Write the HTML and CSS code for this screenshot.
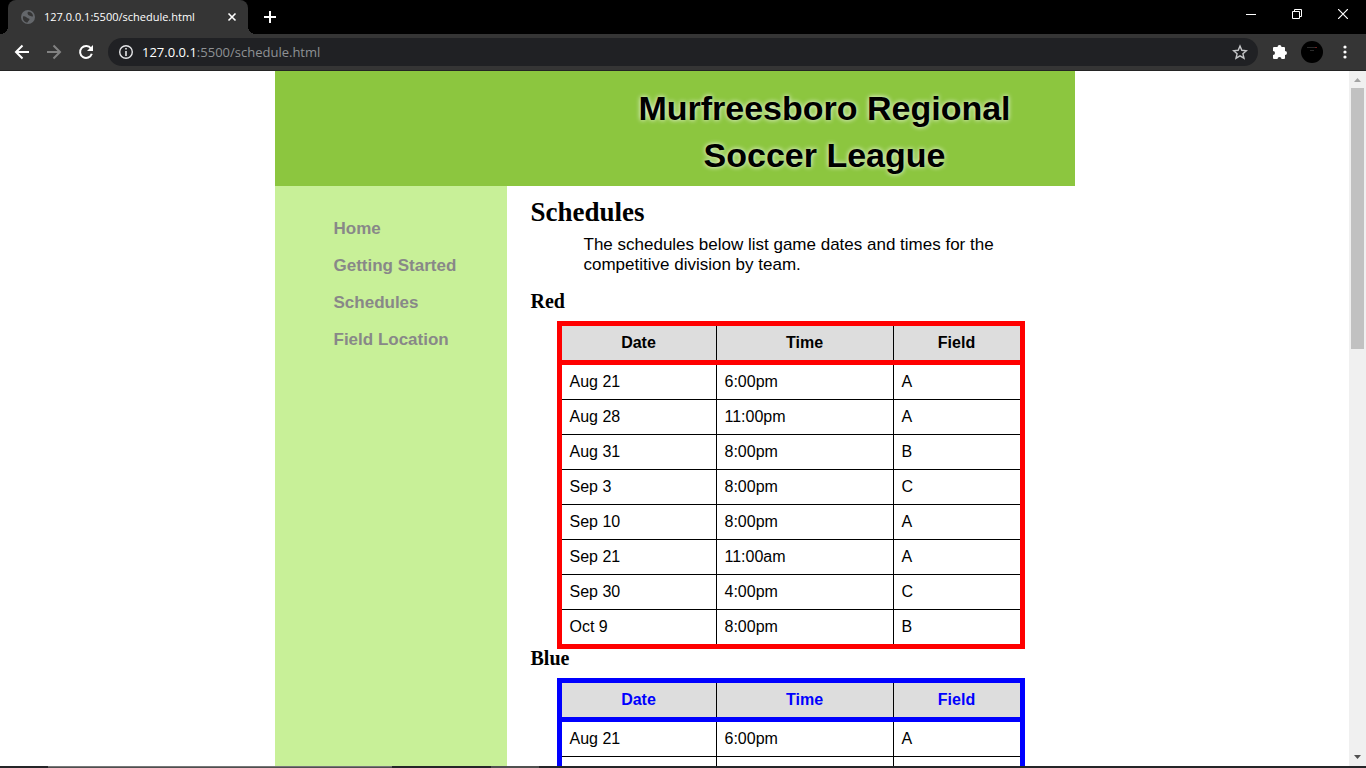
FILE: index.html
```html
<!DOCTYPE html>
<html lang="en">
<head>
<meta charset="utf-8">
<title>Murfreesboro Regional Soccer League</title>
<link rel="stylesheet" href="styles.css">
</head>
<body>
<div class="browser">
  <div class="tabstrip">
    <div class="tab">
      <svg class="favicon" width="16" height="16" viewBox="0 0 16 16" aria-hidden="true"><circle cx="8" cy="8" r="7" fill="#64676b"/><path d="M3 7.500c1.500-.8 3 .2 4 1.200s2.500.3 2.500 1.500-1.500 1.500-2 3.300C4.500 13.500 2.500 11 3 7.500zM8 3c1.500-.8 3.500.5 4.500 2.200.8 1.500.5 2.800-.5 2.300-1-.6-1.800-.5-2.800-1S6.800 4 8 3z" fill="#353535"/></svg>
      <span class="tab-title">127.0.0.1:5500/schedule.html</span>
      <button class="icon-btn tab-close" aria-label="Close tab"><svg width="10" height="10" viewBox="0 0 10 10"><path d="M1.500 1.500l7 7M8.500 1.500l-7 7" stroke="#fff" stroke-width="1.600"/></svg></button>
    </div>
    <button class="icon-btn new-tab" aria-label="New tab"><svg width="12" height="12" viewBox="0 0 12 12"><path d="M6 0v12M0 6h12" stroke="#fff" stroke-width="2"/></svg></button>
    <div class="window-controls">
      <button class="icon-btn" aria-label="Minimize"><svg width="10" height="10" viewBox="0 0 10 10"><path d="M0 5.500h10" stroke="#fff"/></svg></button>
      <button class="icon-btn" aria-label="Restore"><svg width="10" height="10" viewBox="0 0 10 10"><path d="M.5 2.500h7v7h-7zM2.500 2.500v-2h7v7h-2" fill="none" stroke="#fff"/></svg></button>
      <button class="icon-btn" aria-label="Close"><svg width="10" height="10" viewBox="0 0 10 10"><path d="M0 0l10 10M10 0L0 10" stroke="#fff" stroke-width="1.200"/></svg></button>
    </div>
  </div>
  <div class="toolbar">
    <button class="icon-btn" aria-label="Back"><svg width="16" height="16" viewBox="0 0 16 16"><path d="M15 8H2M8.500 1.500L2 8l6.500 6.500" fill="none" stroke="#fff" stroke-width="2"/></svg></button>
    <button class="icon-btn" aria-label="Forward"><svg width="16" height="16" viewBox="0 0 16 16"><path d="M1 8h13M7.500 1.500L14 8l-6.500 6.500" fill="none" stroke="#828282" stroke-width="2"/></svg></button>
    <button class="icon-btn" aria-label="Reload"><svg width="16" height="16" viewBox="0 0 16 16"><path d="M13 4.500A6 6 0 1 0 13.800 9.800" fill="none" stroke="#fff" stroke-width="2"/><path d="M15 1v6H9z" fill="#fff"/></svg></button>
    <div class="omnibox">
      <svg width="16" height="16" viewBox="0 0 16 16" aria-hidden="true"><circle cx="8" cy="8" r="6.300" fill="none" stroke="#e4e5e7" stroke-width="1.400"/><path d="M8 4v1.600M8 7v5" stroke="#e4e5e7" stroke-width="1.600"/></svg>
      <span class="url"><b>127.0.0.1</b>:5500/schedule.html</span>
      <button class="icon-btn star" aria-label="Bookmark"><svg width="16" height="16" viewBox="0 0 16 16"><path d="M8 2l1.800 4.300 4.600.4-3.500 3 1.100 4.500L8 11.800l-4 2.400 1.100-4.500-3.500-3 4.600-.4z" fill="none" stroke="#c5c6c8" stroke-width="1.400"/></svg></button>
    </div>
    <div class="actions">
      <button class="icon-btn" aria-label="Extensions"><svg width="16" height="16" viewBox="0 0 16 16"><path d="M2 3h3.500a2 2 0 1 1 4 0H12a1 1 0 0 1 1 1v3a2 2 0 1 1 0 4v3a1 1 0 0 1-1 1H9.500a2 2 0 0 0-4 0H2a1 1 0 0 1-1-1v-3a2 2 0 0 0 0-4V4a1 1 0 0 1 1-1z" fill="#fff"/></svg></button>
      <button class="icon-btn" aria-label="Profile"><svg width="22" height="22" viewBox="0 0 22 22"><circle cx="11" cy="11" r="11" fill="#000"/><path d="M6 6.500h8M9 9.500h4" stroke="#2b2b2b"/><path d="M14 6.500h2" stroke="#702222"/></svg></button>
      <button class="icon-btn" aria-label="Menu"><svg width="4" height="16" viewBox="0 0 4 16"><g fill="#fff"><circle cx="2" cy="3" r="1.600"/><circle cx="2" cy="8" r="1.600"/><circle cx="2" cy="13" r="1.600"/></g></svg></button>
    </div>
  </div>
  <div class="viewport">
    <div class="document">
      <div class="page">
        <header class="banner"><h1>Murfreesboro Regional<br>Soccer League</h1></header>
        <div class="columns">
          <nav class="sidebar">
            <ul>
              <li><a href="#home">Home</a></li>
              <li><a href="#start">Getting Started</a></li>
              <li><a href="#schedules">Schedules</a></li>
              <li><a href="#field">Field Location</a></li>
            </ul>
          </nav>
          <main class="content" id="schedules">
            <h2>Schedules</h2>
            <p>The schedules below list game dates and times for the competitive division by team.</p>
            <h3 id="red">Red</h3>
            <table class="schedule red" aria-labelledby="red">
              <colgroup><col class="c-date"><col class="c-time"><col class="c-field"></colgroup>
              <thead><tr><th>Date</th><th>Time</th><th>Field</th></tr></thead>
              <tbody>
                <tr><td>Aug 21</td><td>6:00pm</td><td>A</td></tr>
                <tr><td>Aug 28</td><td>11:00pm</td><td>A</td></tr>
                <tr><td>Aug 31</td><td>8:00pm</td><td>B</td></tr>
                <tr><td>Sep 3</td><td>8:00pm</td><td>C</td></tr>
                <tr><td>Sep 10</td><td>8:00pm</td><td>A</td></tr>
                <tr><td>Sep 21</td><td>11:00am</td><td>A</td></tr>
                <tr><td>Sep 30</td><td>4:00pm</td><td>C</td></tr>
                <tr><td>Oct 9</td><td>8:00pm</td><td>B</td></tr>
              </tbody>
            </table>
            <h3 id="blue">Blue</h3>
            <table class="schedule blue" aria-labelledby="blue">
              <colgroup><col class="c-date"><col class="c-time"><col class="c-field"></colgroup>
              <thead><tr><th>Date</th><th>Time</th><th>Field</th></tr></thead>
              <tbody>
                <tr><td>Aug 21</td><td>6:00pm</td><td>A</td></tr>
                <tr><td></td><td></td><td></td></tr>
              </tbody>
            </table>
          </main>
        </div>
      </div>
    </div>
    <div class="scrollbar">
      <svg width="17" height="17" viewBox="0 0 17 17" aria-hidden="true"><path d="M5 11h7L8.500 7z" fill="#a3a3a3"/></svg>
      <div class="track"><div class="thumb"></div></div>
      <svg width="17" height="17" viewBox="0 0 17 17" aria-hidden="true"><path d="M5 6h7l-3.500 4z" fill="#505050"/></svg>
    </div>
  </div>
  <div class="taskbar"><span class="task wide"></span><span class="task"></span></div>
</div>
</body>
</html>
```
FILE: styles.css
```css
* { box-sizing: border-box; }
body {
  margin: 0;
  background: #fff;
  color: #000;
  font: 16px/20px "Liberation Sans", Arial, sans-serif;
}
.browser {
  display: flex;
  flex-direction: column;
  height: 100vh;
  overflow: hidden;
}
.icon-btn {
  display: flex;
  align-items: center;
  justify-content: center;
  padding: 0;
  border: 0;
  background: none;
}

/* Tab strip */
.tabstrip {
  display: flex;
  flex: none;
  height: 34px;
  padding-left: 8px;
  background: #000;
}
.tab {
  position: relative;
  display: flex;
  align-items: center;
  gap: 8px;
  width: 240px;
  padding: 0 11px 0 12px;
  border-radius: 8px 8px 0 0;
  background: #353535;
  color: #fff;
  font: 11px/16px "Open Sans", "Noto Sans", sans-serif;
}
.tab::before,
.tab::after {
  content: "";
  position: absolute;
  bottom: 0;
  width: 8px;
  height: 8px;
}
.tab::before { left: -8px; background: radial-gradient(circle at 0 0, #000 8px, #353535 8px); }
.tab::after { right: -8px; background: radial-gradient(circle at 100% 0, #000 8px, #353535 8px); }
.favicon { flex: none; }
.tab-title { flex: 1; white-space: nowrap; }
.new-tab { margin-left: 16px; }
.window-controls { display: flex; margin-left: auto; height: 28px; }
.window-controls .icon-btn { width: 46px; }

/* Toolbar */
.toolbar {
  display: flex;
  flex: none;
  align-items: center;
  gap: 16px;
  height: 37px;
  padding: 0 19px 0 14px;
  border-bottom: 1px solid #242424;
  background: #353535;
}
.omnibox {
  display: flex;
  flex: 1;
  align-items: center;
  gap: 8px;
  height: 28px;
  margin: 0 -2px;
  padding: 0 10px;
  border-radius: 14px;
  background: #202124;
  color: #8e9194;
  font: 13px/20px "Open Sans", "Noto Sans", sans-serif;
}
.url b { color: #fff; font-weight: 400; }
.star { margin-left: auto; }
.actions { display: flex; align-items: center; gap: 16px; }
.actions .icon-btn:nth-child(2) { margin: 0 4px 0 -3px; }

/* Viewport */
.viewport { display: flex; flex: 1; min-height: 0; }
.document { flex: 1; overflow: hidden; }
.page {
  display: flex;
  flex-direction: column;
  max-width: 800px;
  min-height: 100%;
  margin: 0 auto;
}
.banner {
  padding: 14px 0 7px 37.5%;
  background: #8cc63f;
}
.banner h1 {
  margin: 0;
  font-size: 34px;
  line-height: 47px;
  text-align: center;
  text-shadow: 0 0 5px #fff;
}
.columns { display: flex; flex: 1; }
.sidebar { width: 29%; background: #c8f098; }
.sidebar ul { margin: 0; padding: 24px 0 0 59px; list-style: none; }
.sidebar a {
  color: #888;
  font-size: 17px;
  font-weight: 700;
  line-height: 37px;
  text-decoration: none;
}
.content { flex: 1; padding: 12px 50px 0 24px; }
h2, h3 { font-family: Georgia, "Liberation Serif", serif; }
h2 { margin: 0 0 9px; font-size: 27px; line-height: 28px; }
h3 { margin: 0 0 11px; font-size: 20px; line-height: 18px; }
.content p { margin: 0 0 17px; padding-left: 53px; font-size: 17px; }

/* Schedule tables */
.schedule {
  width: 468px;
  margin-left: 26px;
  border: 5px solid var(--team);
  border-collapse: collapse;
  table-layout: fixed;
  line-height: 18px;
}
.red { --team: #f00; }
.blue { --team: #00f; }
.c-date { width: 157px; }
.c-time { width: 177px; }
.schedule thead { border-bottom: 5px solid var(--team); background: #ddd; }
.schedule th,
.schedule td { height: 35px; padding: 8px; border: 1px solid #000; text-align: left; }
.schedule th { text-align: center; }
.blue th { color: #00f; }

/* Scrollbar and taskbar */
.scrollbar { display: flex; flex-direction: column; width: 17px; background: #f0f0f0; }
.scrollbar svg { display: block; flex: none; }
.track { flex: 1; padding: 0 2px; }
.thumb { height: 39.5%; background: #c1c1c1; }
.taskbar { display: flex; flex: none; gap: 99px; height: 2px; padding-left: 48px; background: #252528; }
.task { width: 48px; background: #505050; }
.task.wide { width: 344px; border-top: 1px solid #777; }
```
